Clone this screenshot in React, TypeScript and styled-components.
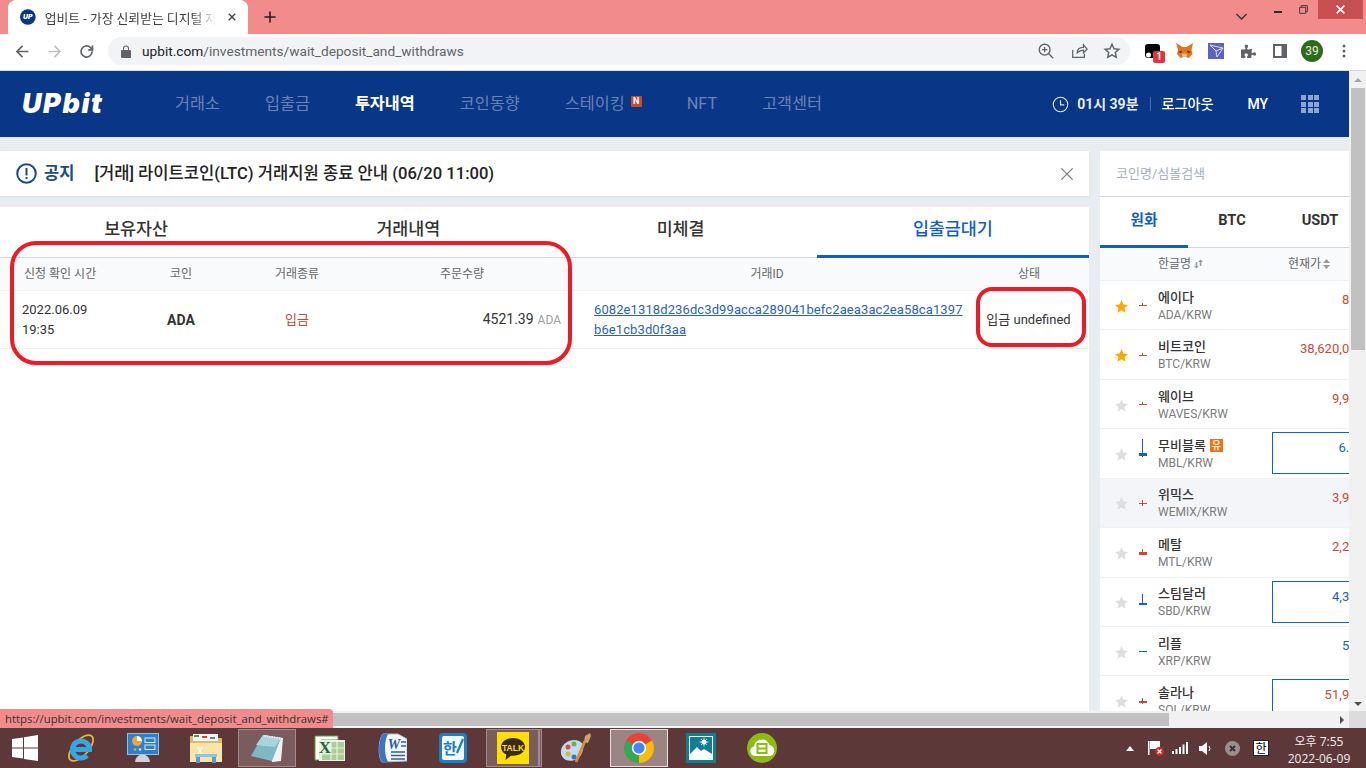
import React from "react";
import styled, { createGlobalStyle } from "styled-components";
import { FaPuzzlePiece } from "react-icons/fa";

const FONT = `Roboto, "Noto Sans CJK KR", sans-serif`;

const Global = createGlobalStyle`
  html, body { margin: 0; padding: 0; overflow: hidden; background: #fff; }
  body { font-family: ${FONT}; }
  * { box-sizing: border-box; }
`;

const Shell = styled.div`
  position: relative;
  width: 1366px;
  height: 768px;
  display: flex;
  flex-direction: column;
  overflow: hidden;
`;

/* ---------- browser chrome ---------- */
const TitleBar = styled.div`
  height: 34px;
  flex: none;
  background: #f28b8b;
  display: flex;
  align-items: flex-start;
  padding-left: 8px;
`;
const Tab = styled.div`
  width: 240px;
  height: 34px;
  background: #fff;
  border-radius: 8px 8px 0 0;
  display: flex;
  align-items: center;
  padding: 0 8px 0 12px;
  gap: 9px;
`;
const TabTitle = styled.span`
  width: 175px;
  font: 12.8px ${FONT};
  color: #3c4043;
  white-space: nowrap;
  overflow: hidden;
  -webkit-mask-image: linear-gradient(to right, #000 86%, transparent);
  mask-image: linear-gradient(to right, #000 86%, transparent);
`;
const TabClose = styled.span`
  display: flex;
  margin-left: -1px;
`;
const NewTab = styled.span`
  display: flex;
  margin: 9px 0 0 14px;
`;
const WindowControls = styled.div`
  margin-left: auto;
  display: flex;
  align-items: flex-start;
`;
const Chevron = styled.span`
  display: flex;
  margin: 8px 24px 0 0;
`;
const MinBtn = styled.span`
  width: 8px;
  height: 2px;
  background: #2b2b2b;
  margin: 11px 16px 0 0;
`;
const RestoreBtn = styled.span`
  display: flex;
  margin: 4px 9px 0 0;
`;
const CloseBtn = styled.span`
  width: 45px;
  height: 19px;
  margin-right: 3px;
  background: #c75050;
  display: flex;
  align-items: center;
  justify-content: center;
`;
const Toolbar = styled.div`
  height: 37px;
  flex: none;
  background: #fff;
  border-bottom: 1px solid #dadce0;
  display: flex;
  align-items: center;
  padding: 0 6px 2px 12px;
`;
const NavBtn = styled.span`
  width: 20px;
  height: 20px;
  margin-right: 12px;
  display: flex;
  align-items: center;
  justify-content: center;
`;
const Omnibox = styled.div`
  width: 1022px;
  height: 28px;
  flex: none;
  border-radius: 14px;
  background: #f1f3f4;
  display: flex;
  align-items: center;
  padding: 0 9px 0 13px;
`;
const UrlText = styled.span`
  margin-left: 11px;
  font: 13.7px ${FONT};
  color: #5f6368;
  b { font-weight: 400; color: #202124; }
`;
const OmniIcons = styled.div`
  margin-left: auto;
  display: flex;
  gap: 15px;
  align-items: center;
`;
const ExtRow = styled.div`
  margin-left: 6px;
  display: flex;
  align-items: center;
`;
const ExtSlot = styled.span`
  position: relative;
  width: 32px;
  height: 24px;
  display: flex;
  align-items: center;
  justify-content: center;
`;
const ExtBadge = styled.span`
  position: absolute;
  left: 17px;
  top: 12px;
  width: 12px;
  height: 12px;
  background: #e8303a;
  border-radius: 2px;
  color: #fff;
  font: 700 10px/12px ${FONT};
  text-align: center;
`;
const Avatar = styled.span`
  width: 22px;
  height: 22px;
  border-radius: 50%;
  background: #2e6b1e;
  color: #e4efdf;
  font: 12px/22px ${FONT};
  text-align: center;
`;

/* ---------- page viewport ---------- */
const Viewport = styled.div`
  flex: 1;
  min-height: 0;
  display: grid;
  grid-template-columns: 1349px 17px;
  grid-template-rows: 640px 17px;
`;
const Page = styled.div`
  overflow: hidden;
  background: #e9ecf1;
  display: flex;
  flex-direction: column;
`;
const Header = styled.header`
  height: 66px;
  flex: none;
  background: #093687;
  display: flex;
  align-items: center;
  padding-left: 22px;
`;
const Logo = styled.span`
  width: 153px;
  font: italic 900 27px/30px Inter, sans-serif;
  color: #fff;
  letter-spacing: 1.6px;
`;
const NavList = styled.nav`
  display: flex;
  gap: 45px;
  align-items: center;
`;
const NavItem = styled.span<{ $active?: boolean }>`
  position: relative;
  font: ${(p) => (p.$active ? 700 : 400)} 16.3px/20px ${FONT};
  color: ${(p) => (p.$active ? "#fff" : "#6b83b4")};
`;
const NBadge = styled.span`
  display: inline-block;
  width: 11px;
  height: 11px;
  margin-left: 6px;
  vertical-align: 5px;
  background: #c84a31;
  border-radius: 1px;
  color: #fff;
  font: 700 9px/11px ${FONT};
  text-align: center;
`;
const HeaderRight = styled.div`
  margin-left: auto;
  display: flex;
  align-items: center;
  padding-right: 30px;
`;
const ClockText = styled.span`
  margin-left: 8px;
  font: 700 14px/20px ${FONT};
  color: #e6ebf5;
`;
const Divider = styled.span`
  width: 1px;
  height: 14px;
  margin: 0 11px;
  background: #4a6aa8;
`;
const Logout = styled.span`
  font: 500 14.1px/20px ${FONT};
  color: #fff;
`;
const My = styled.span`
  margin: 0 33px 0 34px;
  font: 500 14px/20px ${FONT};
  color: #fff;
`;
const AppsGrid = styled.span`
  width: 18px;
  height: 18px;
  display: grid;
  grid-template-columns: repeat(3, 5px);
  grid-auto-rows: 5px;
  gap: 1.5px;
  i { background: #8fa5cd; display: block; }
`;

const Content = styled.div`
  flex: 1;
  min-height: 0;
  display: flex;
  padding-top: 14px;
  gap: 11px;
`;
const MainColumn = styled.div`
  width: 1089px;
  flex: none;
  display: flex;
  flex-direction: column;
  gap: 11px;
`;
const NoticeBar = styled.div`
  height: 45px;
  flex: none;
  background: #fff;
  box-shadow: 0 1px 2px rgba(0, 0, 0, 0.06);
  display: flex;
  align-items: center;
  padding: 0 14px 0 16px;
`;
const NoticeLabel = styled.span`
  margin: 0 20px 0 7px;
  font: 700 16.5px/20px ${FONT};
  color: #1b4a8f;
`;
const NoticeTitle = styled.span`
  font: 500 16.6px/20px ${FONT};
  color: #222;
`;
const NoticeClose = styled.span`
  margin-left: auto;
  display: flex;
`;
const Panel = styled.section`
  flex: 1;
  background: #fff;
`;
const Tabs = styled.div`
  display: grid;
  grid-template-columns: repeat(4, 1fr);
  height: 51px;
  border-bottom: 1px solid #d5d6dc;
`;
const TabItem = styled.div<{ $active?: boolean }>`
  text-align: center;
  font: 500 17.4px/44px ${FONT};
  color: ${(p) => (p.$active ? "#115dcb" : "#333")};
  border-bottom: 3px solid ${(p) => (p.$active ? "#115dcb" : "transparent")};
  height: 51px;
`;
const HeadRow = styled.div`
  display: grid;
  grid-template-columns: 131px 100px 132px 208px 400px 118px;
  height: 33px;
  align-items: center;
  background: #f9fafc;
  border-bottom: 1px solid #f1f1f4;
  font: 12px/16px ${FONT};
  color: #666;
  text-align: center;
`;
const HeadCell = styled.span<{ $pl?: number; $pr?: number; $left?: boolean }>`
  padding-left: ${(p) => p.$pl ?? 0}px;
  padding-right: ${(p) => p.$pr ?? 0}px;
  text-align: ${(p) => (p.$left ? "left" : "center")};
`;
const DataRow = styled.div`
  display: grid;
  grid-template-columns: 131px 100px 132px 208px 400px 118px;
  height: 58px;
  align-items: center;
  border-bottom: 1px solid #f1f1f4;
  font: 13px/20px ${FONT};
  color: #333;
`;
const DateCell = styled.span`
  padding-left: 22px;
  width: 100px;
`;
const CoinCell = styled.b`
  text-align: center;
  font-weight: 700;
  font-size: 14px;
`;
const TypeCell = styled.span`
  text-align: center;
  color: #c84a31;
`;
const AmountCell = styled.span`
  text-align: right;
  padding-right: 10px;
  font-size: 14px;
  small { font-size: 12px; color: #a0a0a0; margin-left: 4px; }
`;
const HashLink = styled.a`
  display: block;
  margin-left: 23px;
  width: 372px;
  color: #2a5fc7;
  letter-spacing: 0.1px;
  text-decoration: underline;
  word-break: break-all;
`;
const StatusCell = styled.span`
  text-align: center;
  white-space: nowrap;
  padding-right: 3px;
`;

/* ---------- coin side panel ---------- */
const SidePanel = styled.aside`
  width: 272px;
  flex: none;
  background: #fff;
`;
const SearchBox = styled.div`
  height: 46px;
  padding-left: 16px;
  display: flex;
  align-items: center;
  border-bottom: 1px solid #d5d6dc;
  font: 13px/20px ${FONT};
  color: #a5afc0;
`;
const SideTabs = styled.div`
  display: grid;
  grid-template-columns: repeat(3, 88px);
  height: 51px;
  border-bottom: 1px solid #d5d6dc;
`;
const SideTab = styled.div<{ $active?: boolean }>`
  height: 51px;
  text-align: center;
  font: 700 14.6px/46px ${FONT};
  color: ${(p) => (p.$active ? "#115dcb" : "#333")};
  border-bottom: 3px solid ${(p) => (p.$active ? "#115dcb" : "transparent")};
`;
const SideHead = styled.div`
  height: 33px;
  display: flex;
  align-items: center;
  background: #f9fafc;
  border-bottom: 1px solid #f1f1f4;
  padding-left: 58px;
  font: 12px/16px ${FONT};
  color: #666;
`;
const SideHeadName = styled.span`
  width: 130px;
  display: flex;
  align-items: center;
  gap: 3px;
`;
const SideHeadPrice = styled.span`
  display: flex;
  align-items: center;
  gap: 2px;
`;
const CoinRow = styled.div<{ $hover?: boolean }>`
  height: 49.43px;
  display: flex;
  align-items: center;
  padding-left: 15px;
  background: ${(p) => (p.$hover ? "#f4f5f8" : "#fff")};
  border-bottom: 1px solid #f1f1f4;
`;
const StarWrap = styled.span`
  width: 13px;
  display: flex;
  margin-top: 2px;
`;
const CandleWrap = styled.span`
  width: 10px;
  margin: 0 10px 0 10px;
  display: flex;
`;
const NameBlock = styled.div`
  width: 114px;
  margin-top: 2px;
`;
const CoinName = styled.div`
  font: 500 13px/17px ${FONT};
  color: #333;
  white-space: nowrap;
  display: flex;
  align-items: center;
  gap: 4px;
`;
const CoinSymbol = styled.div`
  font: 12px/18px ${FONT};
  color: #7b7b7b;
`;
const WarnBadge = styled.span`
  width: 13px;
  height: 13px;
  background: #e8751a;
  color: #ffe9d4;
  font: 700 10px/13px ${FONT};
  text-align: center;
`;
const PriceBox = styled.div<{ $boxed?: boolean; $up?: boolean }>`
  width: 100px;
  height: 42px;
  flex: none;
  align-self: flex-start;
  margin-top: 3px;
  padding-right: 7px;
  text-align: right;
  border: 1px solid ${(p) => (p.$boxed ? "#1261c4" : "transparent")};
  font: 400 13px/29px ${FONT};
  letter-spacing: 0.05px;
  color: ${(p) => (p.$up ? "#c84a31" : "#1261c4")};
`;

/* ---------- scrollbars ---------- */
const VScroll = styled.div`
  background: #f1f1f1;
  display: flex;
  flex-direction: column;
  align-items: center;
`;
const ArrowUp = styled.span`
  margin-top: 7px;
  width: 0;
  height: 0;
  border-left: 4px solid transparent;
  border-right: 4px solid transparent;
  border-bottom: 4px solid #a3a3a3;
`;
const VThumb = styled.span`
  width: 14px;
  height: 262px;
  margin-top: 6px;
  background: #c1c1c1;
`;
const ArrowDown = styled.span`
  margin-top: auto;
  margin-bottom: 5px;
  width: 0;
  height: 0;
  border-left: 4px solid transparent;
  border-right: 4px solid transparent;
  border-top: 4px solid #505050;
`;
const HScroll = styled.div`
  background: #f1f1f1;
  display: flex;
  align-items: center;
`;
const HThumb = styled.span`
  width: 1169px;
  height: 13px;
  background: #c1c1c1;
`;
const ArrowRight = styled.span`
  margin-left: auto;
  margin-right: 5px;
  width: 0;
  height: 0;
  border-top: 4px solid transparent;
  border-bottom: 4px solid transparent;
  border-left: 4px solid #505050;
`;
const Corner = styled.div`
  background: #dcdcdc;
`;

/* ---------- overlays ---------- */
const StatusBubble = styled.div`
  position: absolute;
  left: 0;
  top: 709px;
  width: 333px;
  height: 19px;
  padding-left: 5px;
  background: #f28b8b;
  border-radius: 0 4px 0 0;
  font: 11.35px/19px "Open Sans", sans-serif;
  color: #333;
  white-space: nowrap;
`;
const RedMark = styled.div<{ $x: number; $y: number; $w: number; $h: number; $r: number }>`
  position: absolute;
  left: ${(p) => p.$x}px;
  top: ${(p) => p.$y}px;
  width: ${(p) => p.$w}px;
  height: ${(p) => p.$h}px;
  border: 4px solid #ed1c24;
  border-radius: ${(p) => p.$r}px;
`;

/* ---------- taskbar ---------- */
const Taskbar = styled.div`
  height: 40px;
  flex: none;
  background: #5c3838;
  display: flex;
  align-items: center;
`;
const TaskList = styled.div`
  display: flex;
  align-items: center;
  height: 40px;
`;
const TaskSlot = styled.span<{ $w: number; $mode?: "open" | "active" }>`
  width: ${(p) => p.$w}px;
  height: 38px;
  flex: none;
  display: flex;
  align-items: center;
  justify-content: center;
  border: 1px solid
    ${(p) => (p.$mode === "active" ? "#e8e2e2" : p.$mode === "open" ? "#a08c8c" : "transparent")};
  background: ${(p) => (p.$mode === "active" ? "#9c8484" : p.$mode === "open" ? "#7a5c5c" : "transparent")};
`;
const Tray = styled.div`
  margin-left: auto;
  display: flex;
  align-items: center;
  height: 40px;
`;
const TrayIcon = styled.span<{ $ml: number }>`
  display: flex;
  margin-left: ${(p) => p.$ml}px;
`;
const ImeBox = styled.span`
  width: 16px;
  height: 16px;
  margin-left: 13px;
  background: #fff;
  border: 1px solid #222;
  color: #000;
  font: 12px/14px "Noto Sans CJK KR", sans-serif;
  text-align: center;
`;
const Clock = styled.div`
  width: 72px;
  margin: 3px 11px 0 14px;
  text-align: center;
  font: 12px/17px "Open Sans", "Noto Sans CJK KR", sans-serif;
  color: #f4eeee;
  white-space: nowrap;
`;

/* ---------- icons ---------- */
const Stroke = ({ d, c = "#5f6368", w = 2, s = 20 }: { d: string; c?: string; w?: number; s?: number }) => (
  <svg width={s} height={s} viewBox="0 0 20 20" fill="none" stroke={c} strokeWidth={w}>
    <path d={d} />
  </svg>
);

const Star = ({ on }: { on?: boolean }) => (
  <svg width="13" height="13" viewBox="0 0 24 24" fill={on ? "#ffa800" : "#dedede"}>
    <path d="M12 0l3.500 8.200 8.500.8-6.400 5.800 1.900 8.700L12 18.900 4.500 23.500l1.900-8.700L0 9l8.500-.8z" />
  </svg>
);

const Candle = ({ c, top, bottom, bodyY, bodyH }: { c: string; top: number; bottom: number; bodyY: number; bodyH: number }) => (
  <svg width="10" height="30" viewBox="0 0 10 30" shapeRendering="crispEdges">
    <rect x="4" y={15 - top} width="1" height={top + bottom} fill={c} />
    <rect x="1" y={15 + bodyY} width="8" height={bodyH} fill={c} />
  </svg>
);

const Sort = ({ swap }: { swap?: boolean }) =>
  swap ? (
    <svg width="9" height="10" viewBox="0 0 11 11" fill="#9a9a9a">
      <path d="M8 0l3 3H9v5H7V3H5zM3 11L0 8h2V3h2v5h2z" />
    </svg>
  ) : (
    <svg width="7" height="10" viewBox="0 0 7 10" fill="#9a9a9a">
      <path d="M3.500 0L7 4H0zM0 6h7l-3.500 4z" />
    </svg>
  );

const ChromeIcon = () => (
  <svg width="30" height="30" viewBox="0 0 30 30">
    <path d="M15 15L2.010 7.500A15 15 0 0 1 27.990 7.500z" fill="#ea4335" />
    <path d="M15 15L27.990 7.500A15 15 0 0 1 15 30z" fill="#fbbc04" />
    <path d="M15 15L15 30A15 15 0 0 1 2.010 7.500z" fill="#34a853" />
    <circle cx="15" cy="15" r="7.200" fill="#fff" />
    <circle cx="15" cy="15" r="5.600" fill="#4285f4" />
  </svg>
);

const WinIcon = () => (
  <svg width="26" height="26" viewBox="0 0 26 26" fill="#fff">
    <path d="M0 4l11-1.500v10H0zM12 2.300L26 0v12.500H12zM0 13.500h11v10L0 22zM12 13.500h14V26l-14-2z" />
  </svg>
);

const IeIcon = () => (
  <svg width="30" height="30" viewBox="0 0 30 30">
    <ellipse cx="15" cy="15" rx="16" ry="7.500" transform="rotate(-48 15 15)" fill="none" stroke="#e9b92c" strokeWidth="1.800" />
    <path d="M7.500 16.500H23.500A8.500 8.500 0 1 0 21 22.500" fill="none" stroke="#35a7e6" strokeWidth="5" />
  </svg>
);

const PanelIcon = () => (
  <svg width="32" height="30" viewBox="0 0 32 30">
    <rect x="0.500" y="0.500" width="31" height="21" fill="#2f80c8" stroke="#8cc0e6" />
    <circle cx="10" cy="8" r="5" fill="#f0a53a" />
    <path d="M10 8V3a5 5 0 0 1 5 5z" fill="#fff" />
    <circle cx="8" cy="16.500" r="1.300" fill="#f0a53a" />
    <circle cx="13" cy="16.500" r="1.300" fill="#d9eaf7" />
    <rect x="18" y="5" width="10" height="4.500" fill="none" stroke="#d9eaf7" />
    <rect x="18" y="12" width="10" height="4.500" fill="none" stroke="#d9eaf7" />
    <path d="M8 29a7.500 7.500 0 0 1 15 0z" fill="#d2d2d2" />
  </svg>
);

const FolderIcon = () => (
  <svg width="32" height="29" viewBox="0 0 32 29">
    <path d="M0 2h12l2 2h17a1 1 0 0 1 1 1v23H0z" fill="#d9bd68" />
    <rect x="3" y="0" width="25" height="7" fill="#f3f3f3" />
    <rect x="4" y="1" width="5" height="2" fill="#3f9e4a" />
    <rect x="12" y="2" width="5" height="2" fill="#d8413a" />
    <rect x="20" y="3" width="5" height="2" fill="#3a8fd0" />
    <path d="M0 9h32v19H0z" fill="#f6e6ab" />
    <path d="M5 20h22v3H5z" fill="#8cc4e6" />
    <rect x="6" y="23" width="4" height="6" fill="#5c9cc8" />
    <rect x="22" y="23" width="4" height="6" fill="#5c9cc8" />
    <path d="M8 13l4 7M12 13l-4 7" stroke="#fff" strokeWidth="1" />
  </svg>
);

const NotepadIcon = () => (
  <svg width="32" height="27" viewBox="0 0 32 27">
    <path d="M12 0l20 3-2 23-9 1z" fill="#eef3f4" />
    <path d="M12 0l18 3-9 23L0 21z" fill="#7fb8c4" />
    <path d="M12 0l18 3-6 9L5 10z" fill="#a9d4dc" />
    <path d="M13 1l17 2.500" stroke="#e6eef0" strokeWidth="2" strokeDasharray="1.500 1" />
  </svg>
);

const ExcelIcon = () => (
  <svg width="31" height="27" viewBox="0 0 31 27">
    <path d="M1 1h23v4H7v20H1z" fill="#fff" stroke="#5aa03a" />
    <rect x="5" y="5" width="26" height="21" fill="#eaf2e4" />
    <path d="M17 7h13v18H8v-6h9z" fill="#a9cd94" />
    <path d="M8 13h22M8 19h22M17 7v18M23 7v18" stroke="#eaf2e4" strokeWidth="1.200" />
    <text x="11" y="18" fontSize="17" fontWeight="700" fill="#1a6b32" textAnchor="middle" fontFamily="Liberation Serif">X</text>
  </svg>
);

const WordIcon = () => (
  <svg width="31" height="30" viewBox="0 0 31 30">
    <path d="M7 1h15l9 5v22L6 29C2 25 2 7 7 1z" fill="#f4f7fb" stroke="#a9bcd5" />
    <path d="M7 1h5C8 8 8 22 12 29H6C2 24 2 7 7 1z" fill="#3a76c4" />
    <path d="M15 19h14M15 22.500h14M15 26h14M25 9h5M25 13h5" stroke="#2f5fa8" strokeWidth="1.500" />
    <text x="18" y="16" fontSize="14" fontWeight="700" fontStyle="italic" fill="#2a5aa0" textAnchor="middle" fontFamily="Liberation Serif">W</text>
  </svg>
);

const HancomIcon = () => (
  <svg width="28" height="30" viewBox="0 0 28 30">
    <rect x="0" y="0" width="28" height="30" rx="4" fill="#1a7fc4" />
    <rect x="3" y="3" width="22" height="24" rx="2" fill="#f3f8fb" />
    <text x="11" y="21" fontSize="15" fontWeight="700" fill="#1a7fc4" textAnchor="middle" fontFamily="Noto Sans CJK KR">한</text>
    <path d="M24 6l-6 14" stroke="#1a7fc4" strokeWidth="2.200" />
  </svg>
);

const KakaoIcon = () => (
  <svg width="32" height="32" viewBox="0 0 32 32">
    <rect width="32" height="32" fill="#fde000" />
    <path d="M16 6C9 6 4 10 4 15c0 3.300 2.200 6 5.300 7.600L8.500 28l5.500-4.300c.7.100 1.300.100 2 .1 7 0 12-4 12-8.800S23 6 16 6z" fill="#3a2a1d" />
    <text x="16" y="18.500" fontSize="8.500" fontWeight="700" fill="#fde000" textAnchor="middle" fontFamily="Liberation Sans">TALK</text>
  </svg>
);

const PaintIcon = () => (
  <svg width="31" height="30" viewBox="0 0 31 30">
    <path d="M0 17C2 9 11 5 18 8c6 2.500 5 8 2 14-3 5-10 7-15 5-3-1.500-6-5-5-10z" fill="#bcdcf0" />
    <circle cx="7" cy="14" r="2.500" fill="#d84a3c" />
    <circle cx="13" cy="11" r="2.500" fill="#6db33f" />
    <circle cx="7" cy="21" r="2.500" fill="#e8b030" />
    <circle cx="13" cy="24" r="2.500" fill="#3a74c8" />
    <path d="M15 29L24 8" stroke="#e08a2e" strokeWidth="2.800" />
    <path d="M23 9l1-6 5-3 1 3-3 7z" fill="#c9a36a" />
  </svg>
);

const PhotoIcon = () => (
  <svg width="30" height="30" viewBox="0 0 30 30">
    <rect width="30" height="30" fill="#0f7f92" />
    <rect x="3" y="3" width="24" height="24" fill="#fff" />
    <rect x="4" y="4" width="22" height="17" fill="#0f7f92" />
    <path d="M4 21l7-7 4 4 3-2 8 5z" fill="#fff" />
    <circle cx="18" cy="9" r="2.500" fill="#fff" />
    <path d="M18 4.500v9M13.500 9h9M15 6l6 6M21 6l-6 6" stroke="#fff" strokeWidth="0.700" />
  </svg>
);

const GreenIcon = () => (
  <svg width="30" height="30" viewBox="0 0 30 30">
    <circle cx="15" cy="15" r="15" fill="#8cbb12" />
    <path d="M8 23a5 5 0 0 1-1-9.800 8 8 0 0 1 15.500-1A5.500 5.500 0 0 1 23 23z" fill="#fff" />
    <rect x="9.500" y="10" width="11" height="11" fill="#8cbb12" />
    <rect x="11.500" y="12" width="7" height="2.500" fill="#fff" />
    <rect x="11.500" y="16.500" width="7" height="2.500" fill="#fff" />
  </svg>
);

const FoxIcon = () => (
  <svg width="17" height="16" viewBox="0 0 17 16">
    <path d="M0 0l6.500 4h4L17 0l-1.500 7 1 4-3.500 4-3-1H7.500l-3 1L1 11l1-4z" fill="#e2761b" />
    <path d="M2 9l4-1.500L5 10zM15 9l-4-1.500 1 2.500z" fill="#3a2a20" />
    <path d="M6.500 14h4l.5-3H6z" fill="#d7c1b3" />
    <path d="M7.500 9h2l1 2h-4z" fill="#f6851b" />
  </svg>
);

const PlaneExt = () => (
  <svg width="16" height="16" viewBox="0 0 16 16">
    <rect width="16" height="16" fill="#5c62c0" />
    <path d="M2 2l13 3-6 9-1-6z" fill="none" stroke="#e6e7f7" strokeWidth="0.900" />
    <path d="M2 2l6 6 7-3" fill="none" stroke="#e6e7f7" strokeWidth="0.900" />
  </svg>
);

/* ---------- data ---------- */
type Coin = {
  name: string;
  symbol: string;
  price: string;
  up: boolean;
  fav?: boolean;
  boxed?: boolean;
  hover?: boolean;
  warn?: boolean;
  candle: [number, number, number, number];
};
const COINS: Coin[] = [
  { name: "에이다", symbol: "ADA/KRW", price: "837", up: true, fav: true, candle: [2, 0, 0, 1] },
  { name: "비트코인", symbol: "BTC/KRW", price: "38,620,000", up: true, fav: true, candle: [2, 0, 0, 1] },
  { name: "웨이브", symbol: "WAVES/KRW", price: "9,950", up: true, candle: [2, 0, 0, 1] },
  { name: "무비블록", symbol: "MBL/KRW", price: "6.71", up: false, boxed: true, warn: true, candle: [14, 4, 0, 3] },
  { name: "위믹스", symbol: "WEMIX/KRW", price: "3,900", up: true, hover: true, candle: [3, 3, 0, 1] },
  { name: "메탈", symbol: "MTL/KRW", price: "2,260", up: true, candle: [3, 2, 0, 3] },
  { name: "스팀달러", symbol: "SBD/KRW", price: "4,300", up: false, boxed: true, candle: [8, 3, 1, 2] },
  { name: "리플", symbol: "XRP/KRW", price: "517", up: false, candle: [0, 0, 0, 1] },
  { name: "솔라나", symbol: "SOL/KRW", price: "51,900", up: true, boxed: true, candle: [3, 3, 0, 2] },
];

const NAV = ["거래소", "입출금", "투자내역", "코인동향", "스테이킹", "NFT", "고객센터"];

export default function App() {
  return (
    <Shell>
      <Global />
      <TitleBar>
        <Tab>
          <svg width="16" height="16" viewBox="0 0 16 16">
            <circle cx="8" cy="8" r="8" fill="#093687" />
            <text x="8" y="10.500" fontSize="7" fontWeight="900" fontStyle="italic" fill="#fff" textAnchor="middle" fontFamily="Inter">UP</text>
          </svg>
          <TabTitle>업비트 - 가장 신뢰받는 디지털 자산 거래소</TabTitle>
          <TabClose>
            <Stroke d="M6 6l8 8M14 6l-8 8" c="#45494d" w={1.8} s={16} />
          </TabClose>
        </Tab>
        <NewTab>
          <Stroke d="M10 3v14M3 10h14" c="#222" w={2} s={16} />
        </NewTab>
        <WindowControls>
          <Chevron>
            <Stroke d="M4 7l6 6 6-6" c="#333" w={1.6} s={17} />
          </Chevron>
          <MinBtn />
          <RestoreBtn>
            <Stroke d="M3 6h11v11H3zM6 6V3h11v11h-3" c="#2b2b2b" w={1.5} s={11} />
          </RestoreBtn>
          <CloseBtn>
            <Stroke d="M3 3l14 14M17 3L3 17" c="#fff" w={3} s={11} />
          </CloseBtn>
        </WindowControls>
      </TitleBar>

      <Toolbar>
        <NavBtn>
          <Stroke d="M17 10H4M10 3.500L3.500 10l6.500 6.500" c="#5f6368" w={2} s={17} />
        </NavBtn>
        <NavBtn>
          <Stroke d="M3 10h13M10 3.500l6.500 6.500-6.500 6.500" c="#bdc1c6" w={2} s={17} />
        </NavBtn>
        <NavBtn>
          <Stroke d="M16.500 10a6.500 6.500 0 1 1-2-4.700L17 8V3M17 8h-5" c="#5f6368" w={2} s={17} />
        </NavBtn>
        <Omnibox>
          <svg width="10" height="13" viewBox="0 0 10 13" fill="#5f6368">
            <path d="M1 5h1V3.500a3 3 0 0 1 6 0V5h1a1 1 0 0 1 1 1v6a1 1 0 0 1-1 1H1a1 1 0 0 1-1-1V6a1 1 0 0 1 1-1zm2 0h4V3.500a2 2 0 0 0-4 0z" />
          </svg>
          <UrlText>
            <b>upbit.com</b>/investments/wait_deposit_and_withdraws
          </UrlText>
          <OmniIcons>
            <Stroke d="M8.500 2.500a6 6 0 1 1 0 12 6 6 0 0 1 0-12M13 13l5 5M8.500 5.500v6M5.500 8.500h6" c="#5f6368" w={1.5} s={18} />
            <Stroke d="M3 9v8h13v-4M8 12c0-4 3-6 7-6V3l4 5-4 4V9c-3 0-5 1-7 3z" c="#5f6368" w={1.4} s={18} />
            <Stroke d="M10 2.500l2.300 5 5.400.6-4 3.600 1.100 5.300L10 14.300 5.200 17l1.100-5.300-4-3.600 5.400-.6z" c="#5f6368" w={1.6} s={18} />
          </OmniIcons>
        </Omnibox>
        <ExtRow>
          <ExtSlot>
            <svg width="15" height="14" viewBox="0 0 15 14">
              <rect width="15" height="14" rx="3" fill="#000" />
              <circle cx="3.500" cy="11" r="2.500" fill="#fff" />
            </svg>
            <ExtBadge>1</ExtBadge>
          </ExtSlot>
          <ExtSlot>
            <FoxIcon />
          </ExtSlot>
          <ExtSlot>
            <PlaneExt />
          </ExtSlot>
          <ExtSlot>
            <FaPuzzlePiece size={15} color="#5f6368" />
          </ExtSlot>
          <ExtSlot>
            <svg width="14" height="14" viewBox="0 0 14 14">
              <rect width="14" height="14" fill="#5f6368" />
              <rect x="2" y="2" width="6.500" height="10" fill="#fff" />
            </svg>
          </ExtSlot>
          <ExtSlot>
            <Avatar>39</Avatar>
          </ExtSlot>
          <ExtSlot>
            <svg width="4" height="14" viewBox="0 0 4 14" fill="#5f6368">
              <circle cx="2" cy="2" r="1.500" />
              <circle cx="2" cy="7" r="1.500" />
              <circle cx="2" cy="12" r="1.500" />
            </svg>
          </ExtSlot>
        </ExtRow>
      </Toolbar>

      <Viewport>
        <Page>
          <Header>
            <Logo>UPbit</Logo>
            <NavList>
              {NAV.map((n) => (
                <NavItem key={n} $active={n === "투자내역"}>
                  {n}
                  {n === "스테이킹" && <NBadge>N</NBadge>}
                </NavItem>
              ))}
            </NavList>
            <HeaderRight>
              <Stroke d="M10 1.500a8.500 8.500 0 1 1 0 17 8.500 8.500 0 0 1 0-17M10 5v5.500h4.500" c="#dfe5f1" w={1.3} s={17} />
              <ClockText>01시 39분</ClockText>
              <Divider />
              <Logout>로그아웃</Logout>
              <My>MY</My>
              <AppsGrid>
                {Array.from({ length: 9 }, (_, i) => (
                  <i key={i} />
                ))}
              </AppsGrid>
            </HeaderRight>
          </Header>
          <Content>
            <MainColumn>
              <NoticeBar>
                <svg width="21" height="21" viewBox="0 0 21 21">
                  <circle cx="10.500" cy="10.500" r="9.300" fill="none" stroke="#1b4a8f" strokeWidth="2" />
                  <rect x="9.500" y="5" width="2" height="7.500" fill="#1b4a8f" />
                  <rect x="9.500" y="14" width="2" height="2" fill="#1b4a8f" />
                </svg>
                <NoticeLabel>공지</NoticeLabel>
                <NoticeTitle>[거래] 라이트코인(LTC) 거래지원 종료 안내 (06/20 11:00)</NoticeTitle>
                <NoticeClose>
                  <Stroke d="M3 3l14 14M17 3L3 17" c="#777" w={1.5} s={16} />
                </NoticeClose>
              </NoticeBar>
              <Panel>
                <Tabs>
                  <TabItem>보유자산</TabItem>
                  <TabItem>거래내역</TabItem>
                  <TabItem>미체결</TabItem>
                  <TabItem $active>입출금대기</TabItem>
                </Tabs>
                <HeadRow>
                  <HeadCell $left $pl={24}>신청 확인 시간</HeadCell>
                  <HeadCell>코인</HeadCell>
                  <HeadCell>거래종류</HeadCell>
                  <HeadCell $pr={10}>주문수량</HeadCell>
                  <HeadCell $pr={8}>거래ID</HeadCell>
                  <HeadCell $pr={2}>상태</HeadCell>
                </HeadRow>
                <DataRow>
                  <DateCell>2022.06.09 19:35</DateCell>
                  <CoinCell>ADA</CoinCell>
                  <TypeCell>입금</TypeCell>
                  <AmountCell>
                    4521.39<small>ADA</small>
                  </AmountCell>
                  <HashLink href="#">6082e1318d236dc3d99acca289041befc2aea3ac2ea58ca1397b6e1cb3d0f3aa</HashLink>
                  <StatusCell>입금 undefined</StatusCell>
                </DataRow>
              </Panel>
            </MainColumn>
            <SidePanel>
              <SearchBox>코인명/심볼검색</SearchBox>
              <SideTabs>
                <SideTab $active>원화</SideTab>
                <SideTab>BTC</SideTab>
                <SideTab>USDT</SideTab>
              </SideTabs>
              <SideHead>
                <SideHeadName>
                  한글명 <Sort swap />
                </SideHeadName>
                <SideHeadPrice>
                  현재가 <Sort />
                </SideHeadPrice>
              </SideHead>
              {COINS.map((c) => {
                const col = c.up ? "#c84a31" : "#1261c4";
                return (
                  <CoinRow key={c.symbol} $hover={c.hover}>
                    <StarWrap>
                      <Star on={c.fav} />
                    </StarWrap>
                    <CandleWrap>
                      <Candle c={col} top={c.candle[0]} bottom={c.candle[1]} bodyY={c.candle[2]} bodyH={c.candle[3]} />
                    </CandleWrap>
                    <NameBlock>
                      <CoinName>
                        {c.name}
                        {c.warn && <WarnBadge>유</WarnBadge>}
                      </CoinName>
                      <CoinSymbol>{c.symbol}</CoinSymbol>
                    </NameBlock>
                    <PriceBox $boxed={c.boxed} $up={c.up}>
                      {c.price}
                    </PriceBox>
                  </CoinRow>
                );
              })}
            </SidePanel>
          </Content>
        </Page>
        <VScroll>
          <ArrowUp />
          <VThumb />
          <ArrowDown />
        </VScroll>
        <HScroll>
          <HThumb />
          <ArrowRight />
        </HScroll>
        <Corner />
      </Viewport>

      <Taskbar>
        <TaskList>
          <TaskSlot $w={50}><WinIcon /></TaskSlot>
          <TaskSlot $w={62}><IeIcon /></TaskSlot>
          <TaskSlot $w={62}><PanelIcon /></TaskSlot>
          <TaskSlot $w={64}><FolderIcon /></TaskSlot>
          <TaskSlot $w={58} $mode="open"><NotepadIcon /></TaskSlot>
          <TaskSlot $w={66}><ExcelIcon /></TaskSlot>
          <TaskSlot $w={58}><WordIcon /></TaskSlot>
          <TaskSlot $w={66}><HancomIcon /></TaskSlot>
          <TaskSlot $w={53} $mode="open"><KakaoIcon /></TaskSlot>
          <TaskSlot $w={3} $mode="open" />
          <TaskSlot $w={68}><PaintIcon /></TaskSlot>
          <TaskSlot $w={58} $mode="active"><ChromeIcon /></TaskSlot>
          <TaskSlot $w={66}><PhotoIcon /></TaskSlot>
          <TaskSlot $w={56}><GreenIcon /></TaskSlot>
        </TaskList>
        <Tray>
          <TrayIcon $ml={0}>
            <svg width="8" height="5" viewBox="0 0 8 5" fill="#fff"><path d="M4 0l4 5H0z" /></svg>
          </TrayIcon>
          <TrayIcon $ml={14}>
            <svg width="16" height="16" viewBox="0 0 16 16">
              <rect x="0" y="1" width="1.500" height="14" fill="#fff" />
              <path d="M2 1h10v8H2z" fill="#fff" />
              <circle cx="11.500" cy="11.500" r="4.500" fill="#e02020" />
              <path d="M9.500 9.500l4 4M13.500 9.500l-4 4" stroke="#fff" strokeWidth="1.200" />
            </svg>
          </TrayIcon>
          <TrayIcon $ml={8}>
            <svg width="16" height="12" viewBox="0 0 16 12" fill="#fff">
              <rect x="0" y="9" width="2" height="3" />
              <rect x="3.500" y="7" width="2" height="5" />
              <rect x="7" y="5" width="2" height="7" />
              <rect x="10.500" y="2.500" width="2" height="9.500" />
              <rect x="14" y="0" width="2" height="12" />
            </svg>
          </TrayIcon>
          <TrayIcon $ml={11}>
            <svg width="12" height="13" viewBox="0 0 12 13" fill="#fff">
              <path d="M0 4h3l5-4v13L3 9H0z" />
              <path d="M10 4q2 2.500 0 5" fill="none" stroke="#fff" />
            </svg>
          </TrayIcon>
          <TrayIcon $ml={14}>
            <svg width="15" height="15" viewBox="0 0 15 15">
              <circle cx="7.500" cy="7.500" r="7.500" fill="#9a8f8f" />
              <path d="M5 5l5 5M10 5l-5 5" stroke="#3f3030" strokeWidth="2" />
            </svg>
          </TrayIcon>
          <ImeBox>한</ImeBox>
          <Clock>
            오후 7:55
            <br />
            2022-06-09
          </Clock>
        </Tray>
      </Taskbar>

      <RedMark $x={10} $y={241} $w={562} $h={124} $r={26} />
      <RedMark $x={976} $y={287} $w={110} $h={60} $r={16} />
      <StatusBubble>https://upbit.com/investments/wait_deposit_and_withdraws#</StatusBubble>
    </Shell>
  );
}
